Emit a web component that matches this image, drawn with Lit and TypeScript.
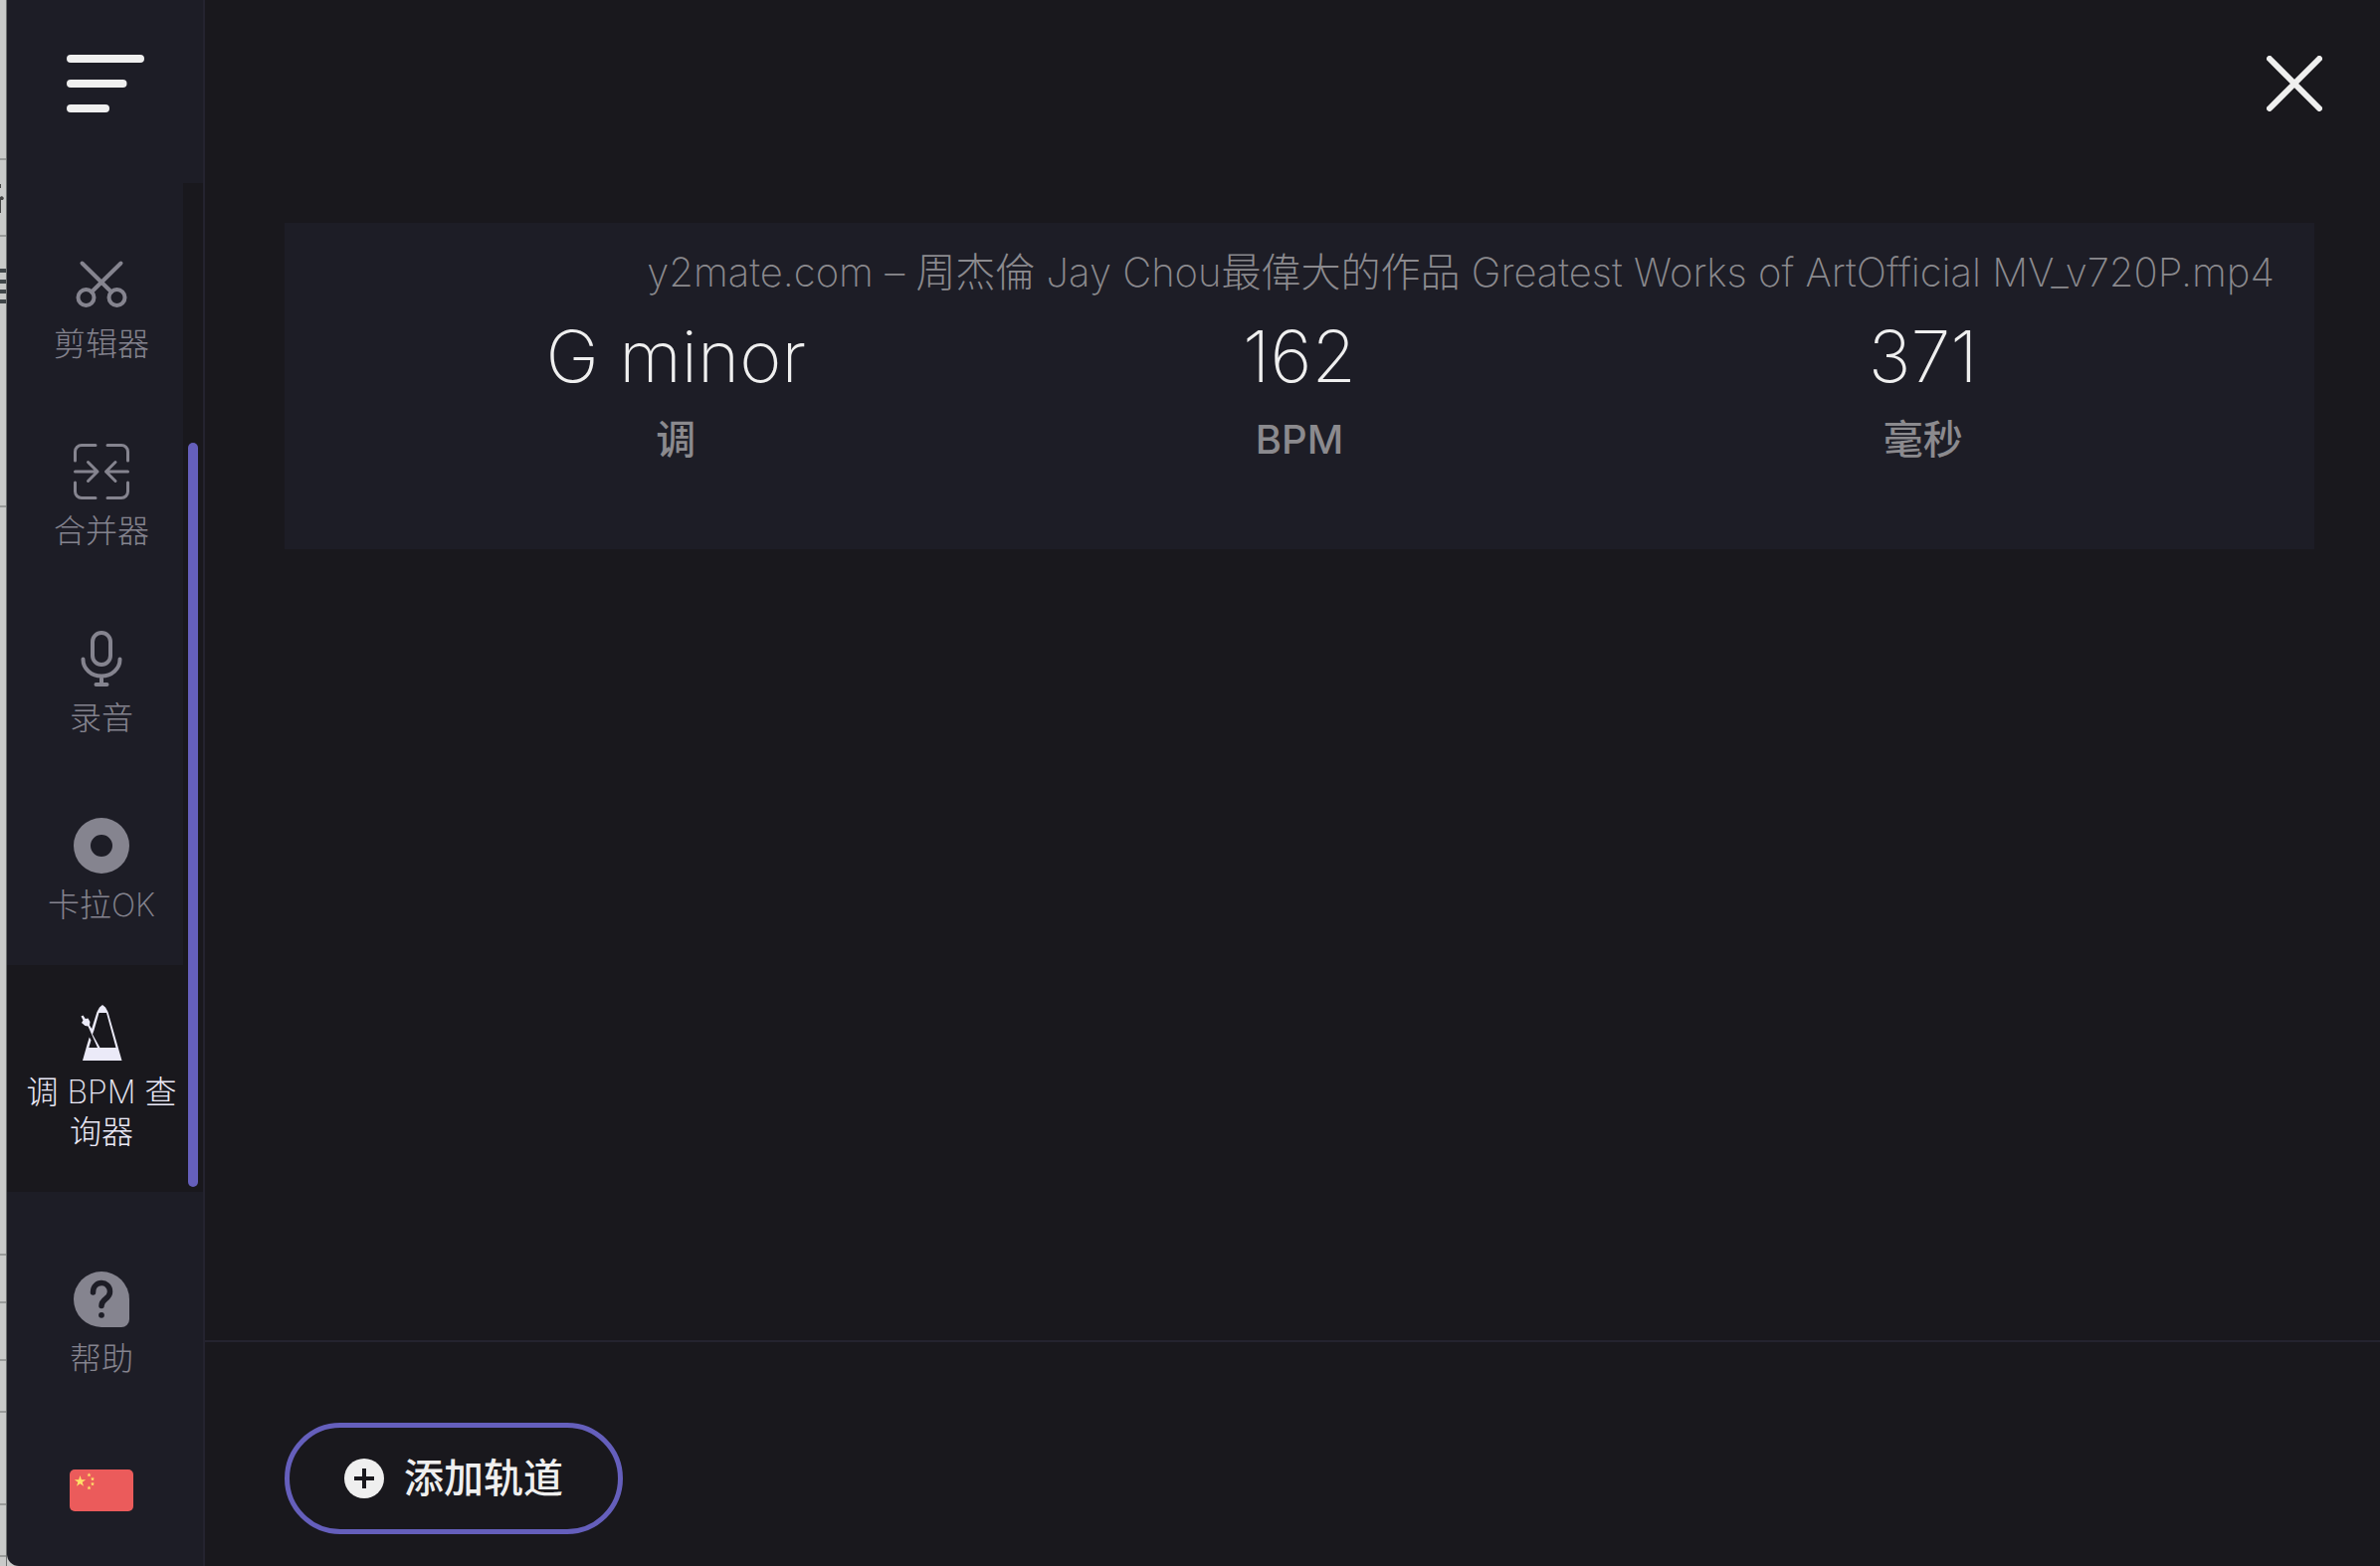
import { LitElement, html, css, svg } from "lit";
import { customElement, property } from "lit/decorators.js";

const scissors = svg`
  <g fill="none" stroke="currentColor" stroke-width="4" stroke-linecap="round">
    <circle cx="12.5" cy="41" r="8"/><circle cx="43.5" cy="41" r="8"/>
    <path d="M8.500 6.500 38 35.500M47.500 6.500 18 35.500"/>
  </g>`;

const joiner = svg`
  <g fill="none" stroke="currentColor" stroke-width="3" stroke-linecap="round" stroke-linejoin="round">
    <path d="M1.500 17V8a6.500 6.500 0 0 1 6.500-6.500H22M34 1.500H48A6.500 6.500 0 0 1 54.500 8V17M54.500 39V48a6.500 6.500 0 0 1-6.500 6.500H34M22 54.500H8A6.500 6.500 0 0 1 1.500 48V39"/>
    <path d="M1.500 28H24M14.500 18.500 24 28 14.500 37.500M54.500 28H32.500M42 18.500 32.500 28 42 37.500"/>
  </g>`;

const microphone = svg`
  <g fill="none" stroke="currentColor" stroke-width="4" stroke-linecap="round">
    <rect x="19" y="2" width="18" height="32" rx="9"/>
    <path d="M9.500 28.500V29A18.500 16.500 0 0 0 46.500 29V28.500M28 46V53M22.500 54H33.500"/>
  </g>`;

const disc = svg`
  <path fill="currentColor" fill-rule="evenodd" d="M28 0a28 28 0 1 0 0 56a28 28 0 1 0 0-56zM28 17a11 11 0 1 1 0 22a11 11 0 1 1 0-22z"/>`;

const metronome = svg`
  <path fill="currentColor" fill-rule="evenodd" d="M9 56 13.500 40 15.800 32.500 17.500 35.500 15.300 43H24L14.500 21.500 11.500 21 8 18 9.500 15.500 7.500 11.500 9.500 10.500 11.800 14 14.500 13.500 16.500 17 16 20.500 18.200 24 23.500 7 26 2.500 29 0 32 2.500 34.500 7 48.500 56ZM20.500 25.500 19 29.500 26.500 43H42.500L33 8H25.500Z"/>`;

const help = svg`
  <path fill="currentColor" d="M28 0A28 28 0 0 1 56 28V48A8 8 0 0 1 48 56H28A28 28 0 0 1 28 0Z"/>
  <path d="M19.500 21C19.500 8.500 36.500 8.500 36.500 20.500C36.500 28 28 27 28 34.500" fill="none" stroke="#1d1d26" stroke-width="5.500" stroke-linecap="round"/>
  <circle cx="28" cy="43.800" r="2.900" fill="#1d1d26"/>`;

interface Tool {
  label: string;
  icon: unknown;
  active?: boolean;
}

const TOOLS: Tool[] = [
  { label: "剪辑器", icon: scissors },
  { label: "合并器", icon: joiner },
  { label: "录音", icon: microphone },
  { label: "卡拉OK", icon: disc },
  { label: "调 BPM 查询器", icon: metronome, active: true },
];

const fonts = css`"Inter", "Noto Sans CJK SC", sans-serif`;

@customElement("side-item")
export class SideItem extends LitElement {
  static styles = css`
    :host { display: block; }
    .item {
      box-sizing: border-box;
      width: 100%;
      display: flex;
      flex-direction: column;
      align-items: center;
      gap: 12px;
      padding: 40px 0 40px 13px;
      color: #85848f;
      font: 250 32px/40px ${fonts};
      text-align: center;
      text-decoration: none;
    }
    .active { background: #19181d; color: #ebeaf8; }
    .icon { width: 56px; height: 56px; display: block; }
  `;

  @property({ attribute: false }) tool!: Tool;

  render() {
    const { label, icon, active } = this.tool;
    return html`
      <a class="item ${active ? "active" : ""}" href="#" aria-current=${active ? "page" : "false"}>
        <svg class="icon" viewBox="0 0 56 56" aria-hidden="true">${icon}</svg>
        <span>${label}</span>
      </a>`;
  }
}

@customElement("track-card")
export class TrackCard extends LitElement {
  static styles = css`
    :host { display: block; }
    .card {
      background: #1d1d26;
      padding: 24px 40px 84px;
      font-family: ${fonts};
    }
    .name {
      margin: 0;
      text-align: right;
      color: #8b8a8e;
      font-size: 40px;
      line-height: 52px;
      font-weight: 250;
    }
    .stats {
      margin: 0;
      padding: 0 40px;
      display: grid;
      grid-template-columns: repeat(3, 1fr);
      text-align: center;
    }
    .stat { display: flex; flex-direction: column-reverse; }
    .value {
      margin: 0;
      color: #efefef;
      font-size: 72px;
      line-height: 116px;
      font-weight: 200;
    }
    .unit {
      color: #8b8a8e;
      font-size: 40px;
      line-height: 52px;
      font-weight: 500;
    }
  `;

  render() {
    const stats = [["G minor", "调"], ["162", "BPM"], ["371", "毫秒"]];
    return html`
      <article class="card">
        <h2 class="name">y2mate.com – 周杰倫 Jay Chou最偉大的作品 Greatest Works of ArtOfficial MV_v720P.mp4</h2>
        <dl class="stats">
          ${stats.map(([value, unit]) => html`
            <div class="stat"><dt class="unit">${unit}</dt><dd class="value">${value}</dd></div>`)}
        </dl>
      </article>`;
  }
}

@customElement("app-root")
export class AppRoot extends LitElement {
  static styles = css`
    :host { display: block; }
    .shell {
      min-height: 100vh;
      display: grid;
      grid-template-columns: 7px 199px 1fr;
      background: #c9cac9;
      font-family: ${fonts};
    }
    .edge { width: 7px; height: 100%; display: block; contain: size; }
    .side {
      display: flex;
      flex-direction: column;
      background: #1d1d26;
      border-right: 2px solid #24232f;
      border-bottom-left-radius: 12px;
    }
    .head { height: 184px; box-sizing: border-box; padding: 52px 0 0 60px; }
    .icon-button {
      display: block;
      border: 0;
      padding: 0;
      background: none;
      color: #efefef;
      cursor: pointer;
    }
    .icon-button svg { display: block; }
    .scroll { display: flex; }
    .tools { flex: 1; padding-top: 34px; }
    .track {
      width: 10px;
      padding: 261px 5px 5px;
      display: flex;
      background: #19181d;
    }
    .thumb { flex: 1; border-radius: 5px; background: #655fbc; }
    .extras { padding: 40px 20px 0 0; display: flex; flex-direction: column; }
    .flag { align-self: center; margin: 51px 0 0 13px; }
    .main { display: flex; flex-direction: column; background: #19181d; min-width: 0; }
    .top {
      height: 224px;
      box-sizing: border-box;
      padding: 56px 58px 0;
      display: flex;
      justify-content: flex-end;
      align-items: flex-start;
    }
    .content { flex: 1; padding: 0 66px 80px 80px; }
    .foot { border-top: 2px solid #24232f; padding: 81px 80px 32px; }
    .add {
      display: flex;
      align-items: center;
      gap: 20px;
      height: 112px;
      padding: 0 55px;
      border: 5px solid #655fbc;
      border-radius: 56px;
      background: none;
      color: #efefef;
      font: 500 40px/52px ${fonts};
      cursor: pointer;
    }
  `;

  render() {
    const star = "M0-1 .225-.309 .951-.309 .363.118 .588.809 0 .382-.588.809-.363.118-.951-.309-.225-.309Z";
    return html`
      <div class="shell">
        <svg class="edge" aria-hidden="true">
          <g fill="#999b9a">
            ${[159, 236, 508, 1260, 1308, 1366, 1418, 1511, 1563].map((y) => svg`<rect y=${y} width="7" height="2"/>`)}
          </g>
          <g fill="#3f4548">
            ${[270, 281, 291, 301].map((y) => svg`<rect y=${y} width="6" height="4"/>`)}
          </g>
          <path d="M0 185H1V189H0ZM0 198 2 197 4 199 3 201H0ZM0 201H1V214H0Z" fill="#454545"/>
          <rect x="6" width="1" height="100%" fill="#6d7070"/>
        </svg>
        <aside class="side">
          <div class="head">
            <button class="icon-button" aria-label="菜单">
              <svg width="78" height="64" viewBox="0 0 78 64">
                <path transform="translate(0 7)" d="M4 0H74M4 25H56.500M4 50H39" fill="none" stroke="currentColor" stroke-width="8" stroke-linecap="round"/>
              </svg>
            </button>
          </div>
          <div class="scroll">
            <nav class="tools">${TOOLS.map((t) => html`<side-item .tool=${t}></side-item>`)}</nav>
            <div class="track"><div class="thumb"></div></div>
          </div>
          <div class="extras">
            <side-item .tool=${{ label: "帮助", icon: help }}></side-item>
            <button class="icon-button flag" aria-label="中文">
              <svg width="64" height="42" viewBox="0 0 64 42">
                <rect width="64" height="42" rx="5" fill="#eb5b5b"/>
                <g fill="#ffe169">
                  <path transform="translate(10.500 12) scale(6)" d=${star}/>
                  <path transform="translate(19.500 5.500) scale(2.300)" d=${star}/>
                  <path transform="translate(23 9.500) scale(2.300)" d=${star}/>
                  <path transform="translate(23 14.500) scale(2.300)" d=${star}/>
                  <path transform="translate(19.500 18.500) scale(2.300)" d=${star}/>
                </g>
              </svg>
            </button>
          </div>
        </aside>
        <main class="main">
          <header class="top">
            <button class="icon-button" aria-label="关闭">
              <svg width="56" height="56" viewBox="0 0 56 56">
                <path d="M3 3 53 53M53 3 3 53" fill="none" stroke="currentColor" stroke-width="6" stroke-linecap="round"/>
              </svg>
            </button>
          </header>
          <section class="content"><track-card></track-card></section>
          <footer class="foot">
            <button class="add">
              <svg width="40" height="40" viewBox="0 0 40 40" aria-hidden="true">
                <circle cx="20" cy="20" r="20" fill="#efefef"/>
                <path d="M20 10V30M10 20H30" stroke="#19181d" stroke-width="4"/>
              </svg>
              <span>添加轨道</span>
            </button>
          </footer>
        </main>
      </div>`;
  }
}
